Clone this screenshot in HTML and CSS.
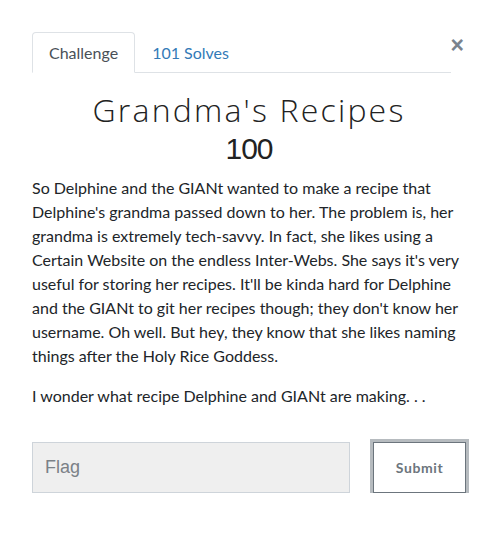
FILE: index.html
```html
<!DOCTYPE html>
<html lang="en">
<head>
<meta charset="utf-8">
<title>Grandma's Recipes</title>
<link rel="stylesheet" href="styles.css">
</head>
<body>
<div class="modal">
  <div class="header">
    <ul class="tabs">
      <li class="tab active">Challenge</li>
      <li class="tab link">101 Solves</li>
    </ul>
    <button class="close" aria-label="Close">×</button>
  </div>
  <h3 class="name">Grandma's Recipes</h3>
  <h4 class="value">100</h4>
  <div class="desc">
    <p>So Delphine and the GIANt wanted to make a recipe that Delphine's grandma passed down to her. The problem is, her grandma is extremely tech-savvy. In fact, she likes using a Certain Website on the endless Inter-Webs. She says it's very useful for storing her recipes. It'll be kinda hard for Delphine and the GIANt to git her recipes though; they don't know her username. Oh well. But hey, they know that she likes naming things after the Holy Rice Goddess.</p>
    <p>I wonder what recipe Delphine and GIANt are making. . .</p>
  </div>
  <form class="submit-row">
    <input class="flag" type="text" placeholder="Flag">
    <button class="submit" type="button">Submit</button>
  </form>
</div>
</body>
</html>
```
FILE: styles.css
```css
* { box-sizing: border-box; }
html, body { margin: 0; padding: 0; background: #fff; }
body {
  font-family: Lato, "Liberation Sans", sans-serif;
  font-size: 16px;
  line-height: 24px;
  color: #212529;
}
.modal {
  width: 434px;
  margin: 32px 0 0 32px;
}
.header {
  display: flex;
  align-items: flex-start;
}
.tabs {
  list-style: none;
  margin: 0;
  padding: 0;
  display: flex;
  width: 420px;
  border-bottom: 1px solid #dee2e6;
}
.tab {
  padding: 8px 16px;
  border: 1px solid transparent;
  border-top-left-radius: 4px;
  border-top-right-radius: 4px;
  margin-bottom: -1px;
  line-height: 23px;
}
.tab.active {
  color: #495057;
  background: #fff;
  border-color: #dee2e6 #dee2e6 #fff;
}
.tab.link {
  color: #337ab7;
}
.close {
  margin: 1px 2px 0 auto;
  padding: 0;
  border: 0;
  background: none;
  font-family: "Liberation Sans", Arial, sans-serif;
  font-size: 23px;
  font-weight: 700;
  line-height: 24px;
  color: #7a838d;
}
.name {
  margin: 17px 0 0;
  text-align: center;
  font-family: "Open Sans", sans-serif;
  font-weight: 300;
  font-size: 32px;
  line-height: 40px;
  letter-spacing: 2.2px;
  color: #222;
}
.value {
  margin: 1px 0 0;
  text-align: center;
  font-family: "Liberation Sans", Arial, sans-serif;
  font-weight: 400;
  font-size: 30px;
  line-height: 36px;
  letter-spacing: -1px;
  color: #222;
}
.desc { margin-top: 9px; }
.desc p { margin: 0 0 16px; }
.submit-row {
  display: flex;
  align-items: center;
  gap: 23px;
  margin-top: 34px;
}
.flag {
  flex: 1;
  height: 51px;
  padding: 0 12px;
  background: #efefef;
  border: 1px solid #ced4da;
  font-family: "Liberation Sans", Arial, sans-serif;
  font-size: 18px;
  color: #495057;
}
.flag::placeholder { color: #7b8187; }
.submit {
  width: 93px;
  height: 51px;
  background: #fff;
  border: 1px solid #6c757d;
  box-shadow: 0 0 0 3px #b6bbbf;
  font-family: Lato, sans-serif;
  font-weight: 700;
  font-size: 14px;
  letter-spacing: 0.6px;
  color: #6c757d;
}
```
